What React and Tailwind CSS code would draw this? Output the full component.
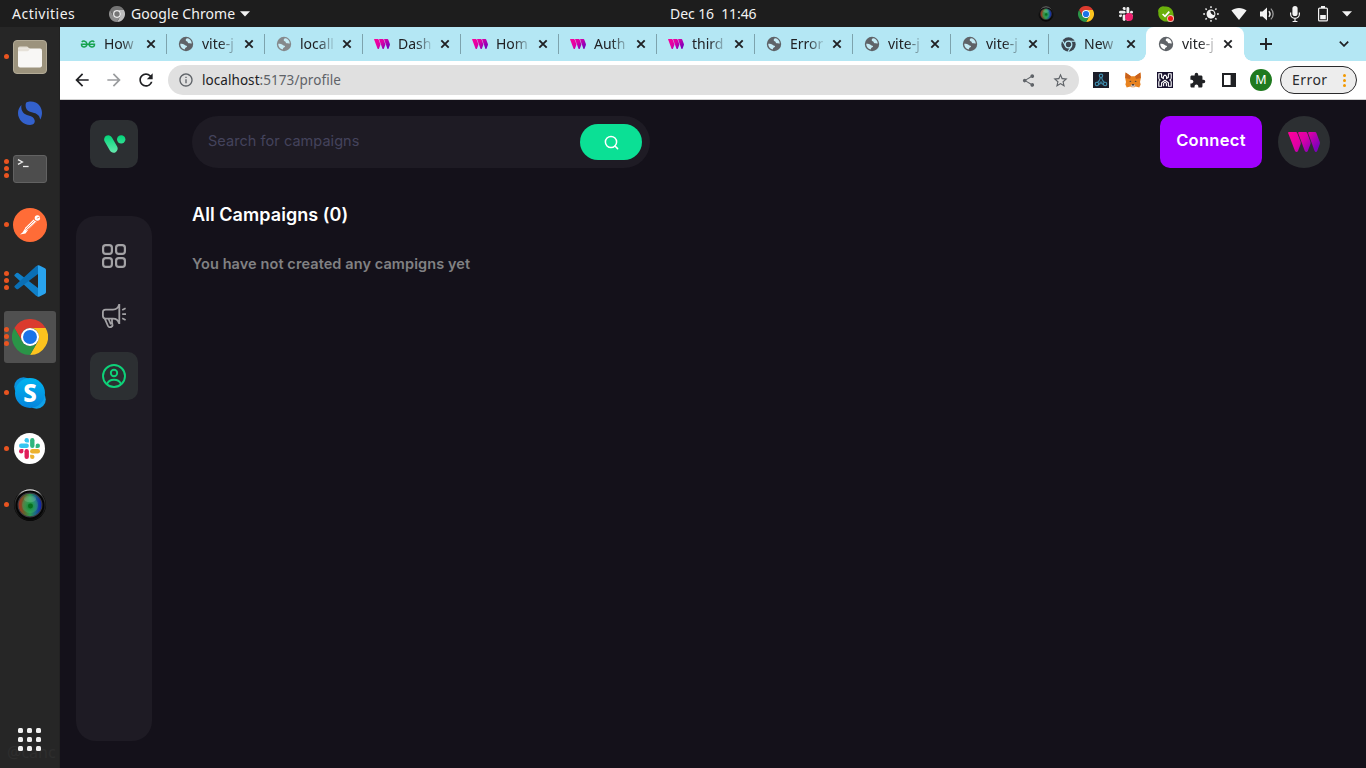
import React from "react";
import {
  MdArrowBack,
  MdArrowForward,
  MdRefresh,
  MdInfoOutline,
  MdShare,
  MdStarBorder,
  MdExtension,
} from "react-icons/md";

const UI = "font-['Noto_Sans','Open_Sans',sans-serif]";

/* ---------- shared drawings ---------- */

function ChromeLogo({ className }) {
  return (
    <svg viewBox="0 0 48 48" className={className}>
      <path fill="#db3b2e" d="M3.2 12A24 24 0 0 1 44.8 12H24A12 12 0 0 0 13.6 30Z" />
      <path fill="#fcc31e" d="M44.8 12A24 24 0 0 1 24 48L34.4 30A12 12 0 0 0 24 12Z" />
      <path fill="#2a9447" d="M24 48A24 24 0 0 1 3.2 12L13.6 30A12 12 0 0 0 34.4 30Z" />
      <circle cx="24" cy="24" r="12" fill="#fff" />
      <circle cx="24" cy="24" r="9.3" fill="#1a73e8" />
    </svg>
  );
}

function ChromeMono({ className, color, gap }) {
  return (
    <svg viewBox="0 0 48 48" className={className}>
      <circle cx="24" cy="24" r="23" fill={color} />
      <circle cx="24" cy="24" r="10.5" fill="none" stroke={gap} strokeWidth="4" />
      <path d="M24 13.5H45M14.9 29.2L4.5 11.5M33.1 29.2L22.5 47" stroke={gap} strokeWidth="3.6" />
    </svg>
  );
}

function ChromeMenuIcon() {
  return (
    <svg viewBox="0 0 48 48" className="h-4 w-4">
      <path fill="#747474" d="M3.2 12A24 24 0 0 1 44.8 12H24A12 12 0 0 0 13.6 30Z" />
      <path fill="#bdbdbd" d="M44.8 12A24 24 0 0 1 24 48L34.4 30A12 12 0 0 0 24 12Z" />
      <path fill="#8c8c8c" d="M24 48A24 24 0 0 1 3.2 12L13.6 30A12 12 0 0 0 34.4 30Z" />
      <circle cx="24" cy="24" r="12" fill="#ececec" />
      <circle cx="24" cy="24" r="8" fill="#757575" />
    </svg>
  );
}

function Globe({ className, land }) {
  return (
    <svg viewBox="0 0 16 16" className={className}>
      <circle cx="8" cy="8" r="7.2" fill="currentColor" />
      <path
        d="M9.4 2.3C8 2.6 7.6 3.4 7.8 4.4C8 5.4 9.4 5 9.6 6C9.8 7 10.6 7.4 11.6 7.2C12.6 7 13 7.6 13.8 7.6C13.6 4.6 11.8 2.8 9.4 2.3Z M2.2 7.8C3.4 7.6 5.2 7.8 6.2 8.6C7 9.2 7.2 9.8 8.4 9.8C9.4 9.8 9.2 11.2 8 11.4C7 11.6 7.2 12.6 6.6 13.5C4 13 2.2 10.6 2.2 7.8Z"
        fill={land}
      />
    </svg>
  );
}

function ThirdwebMark({ className, id }) {
  return (
    <svg viewBox="0 0 32 20" className={className}>
      <defs>
        <linearGradient id={id} x1="0" y1="0" x2="1" y2="0.6">
          <stop offset="0" stopColor="#ff0099" />
          <stop offset="0.5" stopColor="#de00a6" />
          <stop offset="1" stopColor="#7f00bb" />
        </linearGradient>
      </defs>
      <path
        fill={`url(#${id})`}
        d="M.9 0H7.8Q8.8 0 9.2 1L12.500 9.400Q13 11 12.500 12.600L10 19Q9.500 20 8.600 20T7 19L.2 1.200Q-.2 0 .9 0ZM11 0H17.800Q18.800 0 19.200 1L22.300 9.400Q22.900 11 22.300 12.600L19.800 19Q19.300 20 18.400 20T16.800 19L10.200 1.200Q9.800 0 11 0ZM21 0H27Q28 0 28.400 1L31.600 9.400Q32.200 11 31.600 12.600L29.200 19Q28.700 20 27.900 20T26.600 19L20.200 1.200Q19.800 0 21 0Z"
      />
    </svg>
  );
}

function SlackMark({ className, colors }) {
  const [c, g, y, r] = colors;
  return (
    <svg viewBox="0 0 24 24" className={className}>
      <g fill={c}>
        <rect x="0" y="6.3" width="11.3" height="5" rx="2.5" />
        <path d="M8.8 0A2.5 2.5 0 0 0 8.8 5H11.3V2.5A2.5 2.5 0 0 0 8.8 0Z" />
      </g>
      <g fill={g}>
        <rect x="12.7" y="0" width="5" height="11.3" rx="2.5" />
        <path d="M24 8.8A2.5 2.5 0 0 0 19 8.8V11.3H21.5A2.5 2.5 0 0 0 24 8.8Z" />
      </g>
      <g fill={y}>
        <rect x="12.7" y="12.7" width="11.3" height="5" rx="2.5" />
        <path d="M15.2 24A2.5 2.5 0 0 0 15.2 19H12.7V21.5A2.5 2.5 0 0 0 15.2 24Z" />
      </g>
      <g fill={r}>
        <rect x="6.3" y="12.7" width="5" height="11.3" rx="2.5" />
        <path d="M0 15.2A2.5 2.5 0 0 0 5 15.2V12.7H2.5A2.5 2.5 0 0 0 0 15.2Z" />
      </g>
    </svg>
  );
}

function CameraLens({ className, id }) {
  return (
    <svg viewBox="0 0 36 36" className={className}>
      <defs>
        <linearGradient id={id + "h"} x1="0" x2="1">
          <stop offset="0" stopColor="#b02a1c" />
          <stop offset="0.28" stopColor="#5a6a30" />
          <stop offset="0.5" stopColor="#2a9a50" />
          <stop offset="0.72" stopColor="#1c6a86" />
          <stop offset="1" stopColor="#1018b0" />
        </linearGradient>
        <radialGradient id={id + "c"} cx="0.5" cy="0.6" r="0.5">
          <stop offset="0" stopColor="#0a7a22" />
          <stop offset="1" stopColor="#3fc07a" stopOpacity="0.3" />
        </radialGradient>
        <linearGradient id={id + "r"} x1="0" y1="0" x2="0" y2="1">
          <stop offset="0" stopColor="#e8e8e8" />
          <stop offset="0.2" stopColor="#3a3a3a" />
          <stop offset="1" stopColor="#0a0a0a" />
        </linearGradient>
      </defs>
      <circle cx="18" cy="18" r="17" fill="#060606" />
      <circle cx="18" cy="18" r="16" fill="none" stroke={`url(#${id}r)`} strokeWidth="1.2" />
      <circle cx="18" cy="18" r="12.6" fill={`url(#${id}h)`} stroke="#3a3a42" strokeWidth="1.2" />
      <circle cx="18" cy="18" r="8.5" fill={`url(#${id}c)`} />
      <ellipse cx="18" cy="11.500" rx="6.500" ry="3.500" fill="#fff" opacity="0.14" />
      <circle cx="18.5" cy="19" r="2.6" fill="#07701e" />
    </svg>
  );
}

/* ---------- desktop top bar ---------- */

function TrayCell({ className, children }) {
  return <div className={"flex h-full items-center justify-center " + className}>{children}</div>;
}

function TopBar() {
  return (
    <header className={"flex h-[27px] w-full shrink-0 items-center bg-[#1d1d1d] text-[#f2f2f2] " + UI}>
      <div className="flex w-[670px] items-center pl-3">
        <span className="w-[97px] whitespace-pre text-[14px] leading-5 tracking-[0.500px]">Activities</span>
        <ChromeMenuIcon />
        <span className="ml-[6px] w-[109px] whitespace-pre text-[14px] leading-5 tracking-[0.060px]">Google Chrome</span>
        <svg viewBox="0 0 10 6" className="h-[6px] w-[10px]">
          <path d="M0 .3H10L5 5.6Z" fill="#f2f2f2" />
        </svg>
      </div>
      <span className="whitespace-pre text-[14px] leading-5 tracking-[-0.080px]">{"Dec 16  11:46"}</span>
      <div className="ml-auto flex h-full items-center pr-[10px]">
        <TrayCell className="w-10"><CameraLens className="h-4 w-4" id="tray" /></TrayCell>
        <TrayCell className="w-10"><ChromeLogo className="h-4 w-4" /></TrayCell>
        <TrayCell className="w-10">
          <div className="relative">
            <SlackMark className="h-[14px] w-[14px]" colors={["#eee", "#eee", "#eee", "#eee"]} />
            <span className="absolute left-[6px] top-[6px] h-2 w-2 rounded-full bg-[#ee1f6d]" />
          </div>
        </TrayCell>
        <TrayCell className="w-10">
          <div className="relative">
            <svg viewBox="0 0 16 16" className="h-4 w-4">
              <path d="M4.8.2A5 5 0 0 0 .4 6.8A7.7 7.7 0 0 0 9.3 15.4A4.8 4.8 0 0 0 15.5 9A7.7 7.7 0 0 0 6.8.6A5 5 0 0 0 4.8.2Z" fill="#6bb00b" />
              <path d="M4.6 8L7 10.3L11.3 5.6" fill="none" stroke="#fff" strokeWidth="1.7" />
            </svg>
            <span className="absolute left-[10px] top-[10px] h-[5px] w-[5px] rounded-full bg-[#f01818] ring-1 ring-[#f5b8b0]" />
          </div>
        </TrayCell>
        <TrayCell className="ml-[11px] w-7">
          <svg viewBox="0 0 16 16" className="h-4 w-4">
            <circle cx="8" cy="8" r="3.9" fill="none" stroke="#f2f2f2" strokeWidth="1.1" />
            <path d="M7.6 4A4.1 4.1 0 1 0 12 9.2A4 4 0 0 1 7.6 4Z" fill="#f2f2f2" />
            <path d="M8 .2V2M8 14V15.8M.2 8H2M14 8H15.8M2.5 2.5L3.7 3.7M12.3 12.3L13.5 13.5M2.5 13.5L3.7 12.3M12.3 3.7L13.5 2.5" stroke="#f2f2f2" strokeWidth="1.5" />
          </svg>
        </TrayCell>
        <TrayCell className="w-7">
          <svg viewBox="0 0 16 16" className="h-4 w-4">
            <path d="M8 14L.4 4.6C4.4 1 11.6 1 15.6 4.6Z" fill="#f2f2f2" />
          </svg>
        </TrayCell>
        <TrayCell className="w-7">
          <svg viewBox="0 0 16 16" className="h-4 w-4">
            <path d="M1 5.5H3.6L8 1.6V14.4L3.6 10.5H1Z" fill="#f2f2f2" />
            <path d="M9.8 5.2A3.8 3.8 0 0 1 9.8 10.8" fill="none" stroke="#f2f2f2" strokeWidth="1.5" />
            <path d="M11.8 2.6A7.4 7.4 0 0 1 11.8 13.4" fill="none" stroke="#999" strokeWidth="1.3" />
          </svg>
        </TrayCell>
        <TrayCell className="w-7">
          <svg viewBox="0 0 16 16" className="h-4 w-4">
            <rect x="5.4" y="0" width="5.2" height="10" rx="2.6" fill="#f2f2f2" />
            <path d="M3.6 6.5V8A4.4 4.4 0 0 0 12.4 8V6.5M8 12.4V15.5M5.6 15.5H10.4" fill="none" stroke="#f2f2f2" strokeWidth="1.2" />
          </svg>
        </TrayCell>
        <TrayCell className="w-7">
          <svg viewBox="0 0 16 16" className="h-4 w-4">
            <rect x="3.6" y="2.1" width="8.8" height="12.8" rx="1" fill="none" stroke="#f2f2f2" strokeWidth="1.2" />
            <path d="M6 0H10V2H6ZM5.2 9H10.8V13.3H5.2Z" fill="#f2f2f2" />
          </svg>
        </TrayCell>
        <TrayCell className="w-[19px]">
          <svg viewBox="0 0 10 6" className="h-[6px] w-[10px]">
            <path d="M0 .3H10L5 5.6Z" fill="#f2f2f2" />
          </svg>
        </TrayCell>
      </div>
    </header>
  );
}

/* ---------- dock ---------- */

function FilesIcon() {
  return (
    <svg viewBox="0 0 34 34" className="h-[34px] w-[34px]">
      <rect x=".5" y=".5" width="33" height="33" rx="3.5" fill="#9c937d" stroke="#b2aa96" />
      <path d="M5 9V8.2Q5 6.4 6.8 6.4H13.6Q14.8 6.4 15.4 7.4L16.4 9Z" fill="#e2ddd3" />
      <path d="M5 8.6H27.2Q29 8.6 29 10.4V25.6Q29 27.4 27.2 27.4H6.8Q5 27.4 5 25.6Z" fill="#f8f7f5" />
      <path d="M5 11.2H14.4Q15.2 11.2 15.8 10.4L17 8.6H5Z" fill="#e6e1d8" />
    </svg>
  );
}

function SimplenoteIcon() {
  return (
    <svg viewBox="0 0 24 24" className="h-6 w-6">
      <path d="M8.6 1.3C10.4.3 14.5-.1 17.6 1.5C21.6 3.5 24 7.6 24 12C24 14.4 23.3 16.9 22.2 18.6C21.4 14 18.6 12.6 14.6 11.6C10.8 10.6 8.4 9.2 7.8 6.2C7.4 4 7.6 2.2 8.6 1.3Z" fill="#3361cc" />
      <path d="M3.4 4C1.3 6.2 0 9 0 12C0 18.5 5.4 24 12 24C16 24 17 21.4 16.7 19.6C16.3 16.6 14 15.3 10.6 14.5C6 13.4 2.6 10.4 3.4 4Z" fill="#3361cc" />
    </svg>
  );
}

function TerminalIcon() {
  return (
    <svg viewBox="0 0 34 28" className="h-7 w-[34px]">
      <rect x=".5" y=".5" width="33" height="27" rx="2.5" fill="#4d4d4d" stroke="#626262" />
      <path d="M5 4.6L9.4 7L5 9.4" fill="none" stroke="#eee" strokeWidth="1.3" />
      <path d="M10 11.5H15.6" stroke="#eee" strokeWidth="1.3" />
    </svg>
  );
}

function PostmanIcon() {
  return (
    <svg viewBox="0 0 34 34" className="h-[34px] w-[34px]">
      <circle cx="17" cy="17" r="17" fill="#ff6c37" />
      <circle cx="24.4" cy="10" r="2.7" fill="#fff" />
      <path d="M20.6 11.6L12 20L14 22.400L23.600 14Z" fill="#fff" />
      <path d="M12.600 19.600L9.500 24.500L7 26.600L12.500 25.600L15 22" fill="#fff" />
      <path d="M12.500 21.400L21.500 12.600M13.600 22.400L23 14" stroke="#ff6c37" strokeWidth=".8" />
      <path d="M23.8 10.2L26.6 9" stroke="#ff6c37" strokeWidth=".8" />
    </svg>
  );
}

function VsCodeIcon() {
  return (
    <svg viewBox="0 0 32 32" className="h-8 w-8">
      <path d="M24 23L4.2 8Q3.300 7.300 2.400 8L.8 9.500Q-.1 10.400 .8 11.300L22 30.700Q23 31.500 24 31Z" fill="#1080c9" />
      <path d="M24 9L4.2 24Q3.300 24.700 2.400 24L.8 22.500Q-.1 21.600 .8 20.700L22 1.300Q23 .5 24 1Z" fill="#0a6fb5" />
      <path d="M23.300 31.500Q24.500 32 25.500 31.400L31 28.700Q32 28.200 32 27V5Q32 3.800 31 3.300L25.500.6Q24.500 .1 23.300.5Q24 1 24 2.200V29.800Q24 31 23.300 31.500Z" fill="#29a3ee" />
    </svg>
  );
}

function SkypeIcon() {
  return (
    <div className="relative flex h-8 w-8 items-center justify-center">
      <svg viewBox="0 0 32 32" className="absolute inset-0 h-8 w-8">
        <defs>
          <linearGradient id="skype" x1="0" y1="0" x2="0" y2="1">
            <stop offset="0" stopColor="#00b4f0" />
            <stop offset="1" stopColor="#0684dc" />
          </linearGradient>
        </defs>
        <circle cx="9.5" cy="9.5" r="9.3" fill="#0a90dc" />
        <circle cx="22.5" cy="22.5" r="9.3" fill="#0fa0e8" />
        <circle cx="16" cy="16" r="15" fill="url(#skype)" />
      </svg>
      <span className="relative text-[24px] font-extrabold leading-none text-white font-['Noto_Sans',sans-serif]">S</span>
    </div>
  );
}

function DockItem({ dots, active, children }) {
  return (
    <div className="flex h-14 w-[60px] items-center pl-1">
      <div className={"relative flex h-[52px] w-[52px] items-center justify-center rounded-[3px] " + (active ? "bg-[#505050]" : "")}>
        <div className="absolute left-0 top-0 flex h-[51px] flex-col items-center justify-center gap-[2px]">
          {Array.from({ length: dots }, (_, i) => (
            <span key={i} className="h-[5px] w-[5px] rounded-full bg-[#e95420]" />
          ))}
        </div>
        {children}
      </div>
    </div>
  );
}

function Dock() {
  return (
    <aside className="relative flex w-[60px] shrink-0 flex-col overflow-hidden border-r border-[#222] bg-[#262626] pt-[2px]">
      <DockItem dots={1}><FilesIcon /></DockItem>
      <DockItem dots={0}><SimplenoteIcon /></DockItem>
      <DockItem dots={3}><TerminalIcon /></DockItem>
      <DockItem dots={1}><PostmanIcon /></DockItem>
      <DockItem dots={3}><VsCodeIcon /></DockItem>
      <DockItem dots={3} active><ChromeLogo className="h-9 w-9" /></DockItem>
      <DockItem dots={1}><SkypeIcon /></DockItem>
      <DockItem dots={1}>
        <span className="mb-px mr-px flex h-[31px] w-[31px] items-center justify-center rounded-full bg-white">
          <SlackMark className="h-[21px] w-[21px]" colors={["#36c5f0", "#2eb67d", "#ecb22e", "#e01e5a"]} />
        </span>
      </DockItem>
      <DockItem dots={1}><CameraLens className="h-[34px] w-[34px]" id="dock" /></DockItem>
      <span className={"absolute bottom-[6px] left-[7px] whitespace-nowrap text-[16px] leading-5 text-[#2e2e2e] " + UI}>@canc</span>
      <div className="relative mb-[17px] ml-[18px] mt-auto grid w-[23px] grid-cols-3 gap-[4px]">
        {Array.from({ length: 9 }, (_, i) => (
          <span key={i} className="h-[5px] w-[5px] rounded-[1.5px] bg-[#f2f2f2]" />
        ))}
      </div>
    </aside>
  );
}

/* ---------- browser ---------- */

const TABS = [
  { icon: "gfg", label: "How" },
  { icon: "globe", label: "vite-j" },
  { icon: "globeLight", label: "locall" },
  { icon: "tw", label: "Dash" },
  { icon: "tw", label: "Hom" },
  { icon: "tw", label: "Auth" },
  { icon: "tw", label: "third" },
  { icon: "globe", label: "Error" },
  { icon: "globe", label: "vite-j" },
  { icon: "globe", label: "vite-j" },
  { icon: "chrome", label: "New" },
  { icon: "globe", label: "vite-j", active: true },
];

function TabIcon({ kind, index, land }) {
  if (kind === "tw") return <ThirdwebMark className="h-[10px] w-4" id={"tab" + index} />;
  if (kind === "chrome") return <ChromeMono className="h-[15px] w-[15px]" color="#3c4650" gap="#b4e7f4" />;
  if (kind === "gfg")
    return (
      <svg viewBox="0 0 16 16" className="h-4 w-4">
        <path d="M1.800 6.200C3 4.400 6.600 4.800 7 8C6.800 11.800 2 11.800 1.500 8.800M14.200 6.200C13 4.400 9.400 4.800 9 8C9.200 11.800 14 11.800 14.500 8.800M.8 8.300H15.200" fill="none" stroke="#17a34f" strokeWidth="1.500" />
      </svg>
    );
  return <Globe className={"h-4 w-4 " + (kind === "globeLight" ? "text-[#85898c]" : "text-[#5f6368]")} land={land} />;
}

function Tab({ tab, index }) {
  return (
    <div
      className={
        "relative flex h-full w-[98px] shrink-0 items-center pl-3 " +
        (tab.active
          ? "rounded-t-lg bg-white before:absolute before:-left-2 before:bottom-0 before:h-2 before:w-2 before:bg-[radial-gradient(circle_at_0_0,transparent_7.5px,#fff_8px)] after:absolute after:-right-2 after:bottom-0 after:h-2 after:w-2 after:bg-[radial-gradient(circle_at_100%_0,transparent_7.5px,#fff_8px)]"
          : "")
      }
    >
      {index > 0 && !tab.active && <span className="absolute left-0 top-[7px] h-5 w-px bg-[#7da3ad]" />}
      <span className="flex h-4 w-4 items-center justify-center">
        <TabIcon kind={tab.icon} index={index} land={tab.active ? "#ffffff" : "#c4ebf5"} />
      </span>
      <span className="ml-2 w-[35px] whitespace-nowrap text-[14px] leading-5 text-[#202124] [mask-image:linear-gradient(to_right,#000_50%,transparent_102%)]">
        {tab.label}
      </span>
      <svg viewBox="0 0 10 10" className={"h-[10px] w-[10px] " + (tab.active ? "ml-[6px]" : "ml-[7px]")}>
        <path d="M1.3 1.3L8.7 8.7M8.7 1.3L1.3 8.7" stroke="#202124" strokeWidth="1.9" />
      </svg>
    </div>
  );
}

function TabStrip() {
  return (
    <div className={"flex h-[34px] shrink-0 items-center bg-[#b4e7f4] pl-2 " + UI}>
      {TABS.map((t, i) => (
        <Tab key={i} tab={t} index={i} />
      ))}
      <svg viewBox="0 0 12 12" className="ml-4 h-3 w-3">
        <path d="M6 0V12M0 6H12" stroke="#202124" strokeWidth="1.9" />
      </svg>
      <svg viewBox="0 0 10 6" className="ml-auto mr-[17px] h-[6px] w-[10px]">
        <path d="M.8.7L5 4.9L9.2.7" fill="none" stroke="#202124" strokeWidth="1.7" />
      </svg>
    </div>
  );
}

function Cell({ children }) {
  return <div className="flex w-8 items-center justify-center">{children}</div>;
}

function Toolbar() {
  return (
    <div className={"flex h-[39px] shrink-0 items-center border-b border-[#cfcfcf] bg-white pl-[6px] pr-[9px] " + UI}>
      <Cell><MdArrowBack className="h-5 w-5 text-[#202124]" /></Cell>
      <Cell><MdArrowForward className="h-5 w-5 text-[#9a9c9e]" /></Cell>
      <Cell><MdRefresh className="h-5 w-5 text-[#202124]" /></Cell>
      <div className="ml-[6px] flex h-[30px] w-[911px] items-center rounded-full bg-[#e0e0e0] pl-[10px] pr-[10px]">
        <MdInfoOutline className="h-4 w-4 text-[#5f6368]" />
        <span className="ml-2 whitespace-pre text-[13.5px] leading-5 tracking-[0.060px] text-[#202124]">
          localhost<span className="text-[#5f6368]">:5173/profile</span>
        </span>
        <MdShare className="ml-auto h-[15px] w-[15px] text-[#5f6368]" />
        <MdStarBorder className="ml-4 h-[17px] w-[17px] text-[#5f6368]" />
      </div>
      <div className="ml-[6px] flex items-center">
        <Cell>
          <svg viewBox="0 0 16 16" className="h-4 w-4">
            <rect width="16" height="16" fill="#1c1e29" />
            <g fill="none" stroke="#3f8fb0" strokeWidth="1.1">
              <circle cx="8" cy="3.8" r="1.7" />
              <circle cx="3.9" cy="12" r="1.7" />
              <circle cx="12.1" cy="12" r="1.7" />
              <path d="M7.400 5.500L6.600 8L4.600 10.400M8.600 5.500L9.400 8L11.400 10.400M5.600 12.400L7.200 11.600V9.500M10.400 12.400L8.800 11.600V9.500" />
            </g>
          </svg>
        </Cell>
        <Cell>
          <svg viewBox="0 0 16 16" className="h-4 w-4">
            <path d="M.6.6L6 4.2H10L15.4.6L15.8 6L15 10L15.6 12.4L14.3 15.4L10.6 14.4L9.4 15.3H6.6L5.4 14.4L1.7 15.4L.4 12.4L1 10L.2 6Z" fill="#e8821e" />
            <path d="M.6.6L6 4.2L5 7L.2 6ZM15.4.6L10 4.2L11 7L15.8 6Z" fill="#c9611b" />
            <path d="M5.6 13L6.6 12.4H9.4L10.4 13L9.4 15H6.6Z" fill="#d5bfb2" />
            <path d="M4 9.2L6 8.7L6.2 10ZM12 9.2L10 8.7L9.8 10Z" fill="#2b3440" />
            <path d="M6.9 12.2H9.1V13.4H6.9Z" fill="#22222a" />
          </svg>
        </Cell>
        <Cell>
          <svg viewBox="0 0 16 16" className="h-4 w-4">
            <rect width="16" height="16" fill="#17112e" />
            <g fill="none" stroke="#fff" strokeWidth="1.1" strokeLinejoin="round">
              <path d="M1.800 1.800H4.600V5.200L6.400 6.600V4.400L8 3L9.600 4.400V6.600L11.400 5.200V1.800H14.200V6Q14.200 7.400 12.800 8Q14.200 8.600 14.200 10V14.200H11.400V10.800L8 8.200L4.600 10.800V14.200H1.800V10Q1.800 8.600 3.200 8Q1.800 7.400 1.800 6Z" />
              <path d="M6.600 14.200V11.400L8 10.200L9.400 11.400V14.200" />
            </g>
          </svg>
        </Cell>
        <Cell><MdExtension className="h-[17px] w-[17px] text-[#202124]" /></Cell>
        <Cell>
          <svg viewBox="0 0 14 14" className="h-[14px] w-[14px]">
            <path d="M0 0H14V14H0ZM2 2V12H8.6V2Z" fill="#202124" fillRule="evenodd" />
          </svg>
        </Cell>
        <Cell>
          <span className="flex h-[22px] w-[22px] items-center justify-center rounded-full bg-[#1f7a1f] text-[12.5px] leading-none text-white">M</span>
        </Cell>
      </div>
      <div className="ml-[3px] flex h-7 w-[77px] items-center rounded-full border border-[#2a2a2c] bg-[#ededed] pl-[11px] text-[14px] text-[#2a2b2e]">
        <span className="w-[51px] leading-5 tracking-[0.450px]">Error</span>
        <span className="flex flex-col gap-[2px]">
          <i className="h-[3px] w-[3px] rounded-full bg-[#f29900]" />
          <i className="h-[3px] w-[3px] rounded-full bg-[#f29900]" />
          <i className="h-[3px] w-[3px] rounded-full bg-[#f29900]" />
        </span>
      </div>
    </div>
  );
}

/* ---------- the campaign page ---------- */

function BrandMark() {
  return (
    <svg viewBox="0 0 24 24" className="h-6 w-6">
      <defs>
        <linearGradient id="brand" gradientUnits="userSpaceOnUse" x1="0" y1="3" x2="0" y2="21">
          <stop offset="0" stopColor="#00d478" />
          <stop offset="1" stopColor="#67e8ae" />
        </linearGradient>
      </defs>
      <path d="M6.3 7.5L11.5 16.5" stroke="url(#brand)" strokeWidth="8.4" strokeLinecap="round" />
      <circle cx="19.2" cy="7.4" r="4.2" fill="url(#brand)" />
    </svg>
  );
}

function Sidebar() {
  return (
    <div className="flex w-[76px] flex-col items-center">
      <div className="mt-1 flex h-12 w-12 items-center justify-center rounded-[10px] bg-[#2c2f32]">
        <BrandMark />
      </div>
      <nav className="mt-12 flex h-[525px] w-[76px] flex-col items-center gap-3 rounded-[20px] bg-[#1e1b24] py-4">
        <span className="flex h-12 w-12 items-center justify-center">
          <svg viewBox="0 0 24 24" className="h-6 w-6" fill="none" stroke="#a3a2a5" strokeWidth="2.2">
            <rect x="1.100" y="1.100" width="8.800" height="8.800" rx="2.6" />
            <rect x="14.100" y="1.100" width="8.800" height="8.800" rx="2.6" />
            <rect x="1.100" y="14.100" width="8.800" height="8.800" rx="2.6" />
            <rect x="14.100" y="14.100" width="8.800" height="8.800" rx="2.6" />
          </svg>
        </span>
        <span className="flex h-12 w-12 items-center justify-center">
          <svg viewBox="0 0 24 24" className="h-6 w-6" fill="none" stroke="#a3a2a5" strokeWidth="1.8" strokeLinejoin="round">
            <path d="M17.3 0V20M17 .9C16.200 4 14 5.600 11 5.600H3.600C1.600 5.600.9 6.800.9 8.200V11.800C.9 13.600 2 14.600 3.600 14.600H11C14 14.600 16.200 16.200 17 19.300" />
            <path d="M2.800 14.600L6 22C6.500 23.200 8 23.500 9.200 22.900C10.400 22.300 10.800 21.300 10.400 20.200L10 18.800V14.600M6.600 15L9 20.400" />
            <path d="M20.200 6L23.600 4.300M20.200 10.200H24M20.200 14.300L23.600 16" />
          </svg>
        </span>
        <span className="flex h-12 w-12 items-center justify-center rounded-[10px] bg-[#2c2f32]">
          <svg viewBox="0 0 24 24" className="h-6 w-6" fill="none" stroke="#0ed279" strokeWidth="1.9">
            <circle cx="12" cy="12" r="11" />
            <circle cx="12" cy="9" r="3.2" />
            <path d="M4.8 20.3C6 17.3 8.6 15.7 12 15.7S18 17.3 19.2 20.3" />
          </svg>
        </span>
      </nav>
    </div>
  );
}

function CampaignPage() {
  return (
    <main className="flex min-h-0 flex-1 bg-[#14111a] px-4 pt-4 font-['Inter',sans-serif]">
      <Sidebar />
      <section className="ml-10 flex w-[1138px] flex-col">
        <div className="flex items-center">
          <div className="flex h-[52px] w-[458px] items-center rounded-full bg-[#1e1b24] pl-4 pr-2">
            <span className="-mt-[3px] text-[14.5px] leading-5 tracking-[0.050px] text-[#44435c]">Search for campaigns</span>
            <span className="ml-auto flex h-9 w-[62px] items-center justify-center rounded-[20px] bg-[#0be095]">
              <svg viewBox="0 0 15 15" className="h-[15px] w-[15px]" fill="none" stroke="#fff" strokeWidth="1.5" strokeLinecap="round">
                <circle cx="7" cy="7" r="5.6" />
                <path d="M11 11L13.6 13.6" />
              </svg>
            </span>
          </div>
          <span className="ml-auto flex h-[52px] w-[102px] items-center justify-center rounded-[10px] bg-[#a000ff] pb-1 text-[16.500px] font-semibold tracking-[0.300px] text-white">
            Connect
          </span>
          <span className="ml-4 flex h-[52px] w-[52px] items-center justify-center rounded-full bg-[#2c2f32]">
            <ThirdwebMark className="h-5 w-8" id="avatar" />
          </span>
        </div>
        <h1 className="mt-[33px] text-[18px] font-semibold leading-7 tracking-[0.060px] text-white">All Campaigns (0)</h1>
        <p className="mt-[20px] text-[14.500px] font-semibold leading-[30px] tracking-[0.090px] text-[#818183]">
          You have not created any campigns yet
        </p>
      </section>
    </main>
  );
}

export default function App() {
  return (
    <div className="flex h-[768px] w-[1366px] flex-col overflow-hidden">
      <TopBar />
      <div className="flex min-h-0 flex-1">
        <Dock />
        <div className="flex min-w-0 flex-1 flex-col">
          <TabStrip />
          <Toolbar />
          <CampaignPage />
        </div>
      </div>
    </div>
  );
}
